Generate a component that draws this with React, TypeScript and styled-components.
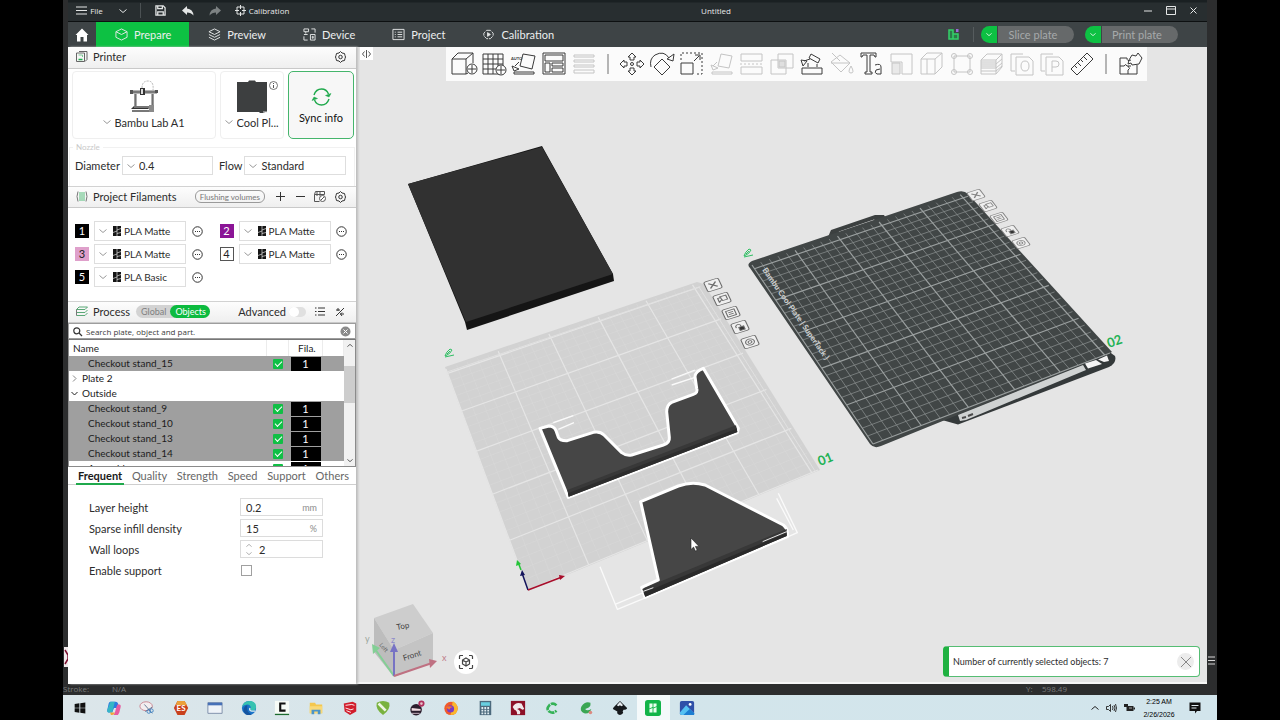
import React from "react";
import styled, { createGlobalStyle } from "styled-components";

const systemFont = `"Open Sans", "Noto Sans", sans-serif`;

const Global = createGlobalStyle`
  * { box-sizing: border-box; }
  html, body { margin: 0; background: #000; }
  body, button, input, select, table {
    font-family: Lato, "Open Sans", sans-serif;
    font-size: 11px;
    color: #2c2c2c;
  }
  button { border: 0; background: none; padding: 0; margin: 0; }
  svg { display: block; flex: none; overflow: visible; }
`;

/* ---------- shell ---------- */

const Desktop = styled.div`
  display: flex;
  flex-direction: column;
  min-height: 100vh;
  margin: 0 63px;
  background: #2c2d2e;
`;

const WindowRow = styled.div`
  display: flex;
  flex: 1;
  position: relative;
`;

const Window = styled.div`
  display: flex;
  flex-direction: column;
  flex: 1;
  min-width: 0;
  margin: 0 10px 0 5px;
  background: #e5e5e5;
`;

const EdgeMarks = styled.svg`
  position: absolute;
  top: 656px;
  right: 2px;
`;

const EdgeHandle = styled.svg`
  position: absolute;
  top: 646px;
  left: 0;
`;

const TitleBar = styled.header`
  display: flex;
  align-items: center;
  height: 22px;
  padding-right: 2px;
  background: linear-gradient(#1a2022 0, #1a2022 2px, #282e30 3px);
  border-bottom: 1px solid #0d1011;
`;

const TitleButton = styled.button<{ $w: number }>`
  display: flex;
  align-items: center;
  justify-content: center;
  gap: 3px;
  width: ${(p) => p.$w}px;
  height: 21px;
  color: #e8eaea;
  font-family: ${systemFont};
  font-size: 8px;
`;

const TitleRule = styled.span`
  width: 1px;
  height: 15px;
  margin: 0 6px;
  background: #4b5153;
`;

const TitleText = styled.h1`
  flex: 1;
  margin: 0;
  text-align: center;
  color: #e8eaea;
  font-family: ${systemFont};
  font-size: 8px;
  font-weight: 400;
`;

const TabBar = styled.nav`
  display: flex;
  align-items: center;
  height: 25px;
  padding-right: 29px;
  background: #3e4446;
`;

const TabRule = styled.span`
  width: 1px;
  height: 15px;
  margin: 0 -4px 0 14px;
  background: #565c5e;
`;

const HomeButton = styled.button`
  display: flex;
  align-items: center;
  justify-content: center;
  width: 28px;
  height: 25px;
`;

const MainTab = styled.button<{ $active?: boolean }>`
  display: flex;
  align-items: center;
  gap: 6px;
  height: 25px;
  padding: 0 18px 0 19px;
  color: #eceeee;
  background: ${(p) => (p.$active ? "#0dc143" : "transparent")};
`;

const Grow = styled.span`
  flex: 1;
`;

const PlateAction = styled.div`
  display: flex;
  height: 17px;
  margin-left: 11px;
  border-radius: 9px;
  overflow: hidden;
`;

const PlateMenu = styled.button`
  display: flex;
  align-items: center;
  justify-content: center;
  width: 17px;
  background: #0dc143;
  border-right: 1px solid #3e4446;
`;

const PlateButton = styled.button`
  width: 76px;
  padding-right: 6px;
  background: #66696a;
  color: #a6a9aa;
`;

const Body = styled.div`
  display: flex;
  flex: 1;
  min-height: 0;
`;

/* ---------- sidebar ---------- */

const Sidebar = styled.aside`
  display: flex;
  flex-direction: column;
  width: 288px;
  background: #fff;
  box-shadow: 2px 0 2px #bdbdbd;
  z-index: 1;
`;

const SectionHead = styled.div`
  display: flex;
  align-items: center;
  height: 22px;
  padding: 0 10px 1px 8px;
  background: linear-gradient(#fdfdfd, #efefef);
  border-top: 1px solid #d2d2d2;
  border-bottom: 1px solid #c9c9c9;
`;

const PrinterHead = styled(SectionHead)`
  padding-bottom: 2px;
  border-top: 0;
`;

const SectionTitle = styled.h2`
  margin: 0 0 0 5px;
  font-size: 11px;
  font-weight: 400;
`;

const IconButton = styled.button`
  display: flex;
  align-items: center;
  justify-content: center;
  height: 16px;
  min-width: 12px;
`;

const HeadIcons = styled.div`
  display: flex;
  align-items: center;
  gap: 8px;
`;

const PrinterCards = styled.div`
  display: flex;
  gap: 4px;
  padding: 2px 2px 0 4px;
`;

const DeviceCard = styled.div<{ $w?: number }>`
  position: relative;
  display: flex;
  flex-direction: column;
  align-items: center;
  flex: ${(p) => (p.$w ? `0 0 ${p.$w}px` : "1")};
  height: 68px;
  padding-top: 8px;
  border: 1px solid #efefef;
  border-radius: 4px;
`;

const InfoMark = styled.svg`
  position: absolute;
  top: 9px;
  right: 5px;
`;

const SyncButton = styled.button`
  display: flex;
  flex-direction: column;
  align-items: center;
  justify-content: center;
  gap: 4px;
  width: 66px;
  height: 68px;
  border: 1px solid #45b56c;
  border-radius: 5px;
  background: #f7f7f7;
  color: #111;
`;

const Picker = styled.label<{ $border?: boolean; $w?: number }>`
  display: flex;
  align-items: center;
  height: ${(p) => (p.$border ? 19 : 16)}px;
  width: ${(p) => (p.$w ? `${p.$w}px` : "auto")};
  padding-left: ${(p) => (p.$border ? 4 : 0)}px;
  gap: 4px;
  border: ${(p) => (p.$border ? "1px solid #dedede" : "0")};
  background: #fff;

  select {
    flex: 1;
    min-width: 0;
    padding: 0;
    border: 0;
    appearance: none;
    background: transparent;
    text-overflow: ellipsis;
    white-space: nowrap;
  }
`;

const Nozzle = styled.fieldset`
  display: flex;
  align-items: center;
  gap: 2px;
  min-width: 0;
  margin: 4px 1px 0;
  padding: 4px 0 11px 5px;
  border: 1px solid #f1f1f1;
  border-bottom: 0;

  legend {
    padding: 0 3px;
    margin-left: -2px;
    font-size: 8px;
    line-height: 9px;
    color: #c9c9c9;
  }
`;

const NozzleLabel = styled.span`
  & + label { margin-right: 4px; }
`;

const FlushButton = styled.button`
  height: 13px;
  padding: 0 4px;
  margin-right: 1px;
  border: 1px solid #9a9a9a;
  border-radius: 6px;
  color: #777;
  font-size: 8px;
  line-height: 10px;
`;

const Filaments = styled.div`
  display: grid;
  grid-template-columns: 1fr 1fr;
  gap: 3px 8px;
  padding: 13px 0 14px 7px;
`;

const FilamentRow = styled.div`
  display: flex;
  align-items: center;
  gap: 5px;
`;

const Swatch = styled.span<{ $bg: string; $fg: string }>`
  width: 14px;
  height: 14px;
  border: 1px solid ${(p) => (p.$bg === "#fff" ? "#555" : p.$bg)};
  background: ${(p) => p.$bg};
  color: ${(p) => p.$fg};
  line-height: 12px;
  text-align: center;
`;

const FilamentPicker = styled(Picker)`
  width: 92px;
  height: 20px;

  select { font-size: 10px; }
`;

const MarkSlot = styled.span`
  margin: 0 -1px 0 2px;
`;

const ModeSwitch = styled.div`
  display: flex;
  height: 13px;
  margin-left: 6px;
  border-radius: 7px;
  background: #d3d3d3;
`;

const ModeButton = styled.button<{ $on?: boolean }>`
  padding: 0 4px 0 5px;
  border-radius: 7px;
  font-size: 9px;
  line-height: 12px;
  background: ${(p) => (p.$on ? "#0dbb3f" : "transparent")};
  color: ${(p) => (p.$on ? "#fff" : "#808080")};
`;

const AdvancedLabel = styled.label`
  display: flex;
  align-items: center;
  gap: 3px;
  margin-right: 8px;
`;

const Toggle = styled.input`
  appearance: none;
  width: 17px;
  height: 10px;
  margin: 0;
  border-radius: 5px;
  background: #e0e0e0;

  &::before {
    content: "";
    display: block;
    width: 10px;
    height: 10px;
    border-radius: 5px;
    background: #fff;
  }
`;

const SearchRow = styled.label`
  display: flex;
  align-items: center;
  gap: 4px;
  height: 16px;
  padding: 0 4px;
  border: 1px solid #9d9d9d;

  input {
    flex: 1;
    min-width: 0;
    padding: 0;
    border: 0;
    outline: 0;
    font-family: ${systemFont};
    font-size: 8px;
    background: transparent;
  }
  input::placeholder { color: #3a3a3a; }
`;

const TreeFrame = styled.div`
  display: flex;
  height: 128px;
  overflow: hidden;
  border: 1px solid #8b8b8b;
  border-top-color: #777;
`;

const TreeScroll = styled.div`
  flex: 1;
  overflow: hidden;
`;

const Tree = styled.table`
  width: 100%;
  table-layout: fixed;
  border-collapse: collapse;

  th, td {
    height: 15px;
    padding: 0;
    font-size: 10px;
    font-weight: 400;
    line-height: 13px;
    text-align: left;
    color: #1c1c1c;
    overflow: hidden;
    white-space: nowrap;
  }
  th { height: 16px; border-right: 1px solid #ececec; padding-left: 4px; }
`;

const TreeRow = styled.tr<{ $selected?: boolean }>`
  background: ${(p) => (p.$selected ? "#9f9f9f" : "#fff")};
`;

const NameCell = styled.td<{ $level: number }>`
  && { padding-left: ${(p) => (p.$level ? 19 : 2)}px; }
`;

const NameText = styled.span`
  display: flex;
  align-items: center;
  gap: 4px;
`;

const PrintCheck = styled.input`
  appearance: none;
  display: block;
  width: 10px;
  height: 10px;
  margin: 0 0 0 6px;
  border-radius: 1px;
  background: #10bf45;

  &::before {
    content: "";
    display: block;
    width: 6px;
    height: 3px;
    margin: 2px 0 0 2px;
    border-left: 1px solid #fff;
    border-bottom: 1px solid #fff;
    transform: rotate(-45deg);
  }
`;

const FilaHead = styled.span`
  display: block;
  padding-left: 5px;
`;

const FilaCell = styled.td`
  && { padding: 0 2px; }
`;

const FilaBadge = styled.span`
  display: block;
  height: 14px;
  background: #000;
  color: #fff;
  text-align: center;
  font-size: 11px;
  line-height: 14px;
`;

const ScrollTrack = styled.div`
  display: flex;
  flex-direction: column;
  align-items: center;
  justify-content: space-between;
  width: 11px;
  padding: 4px 0;
  background: linear-gradient(#f1f1f1 26px, #cdcdcd 26px, #cdcdcd 63px, #f1f1f1 63px);
`;

const ParamTabs = styled.div`
  display: flex;
  justify-content: space-between;
  height: 18px;
  padding: 0 5px 0 8px;
  border-bottom: 1px solid #cfcfcf;
`;

const ParamTab = styled.button<{ $active?: boolean }>`
  height: 18px;
  padding: 0 2px;
  border-bottom: 2px solid ${(p) => (p.$active ? "#1fa94c" : "transparent")};
  color: ${(p) => (p.$active ? "#1a1a1a" : "#666")};
  font-weight: ${(p) => (p.$active ? 700 : 400)};
  line-height: 15px;
`;

const Params = styled.div`
  display: flex;
  flex-direction: column;
  gap: 3px;
  padding: 13px 33px 0 21px;
`;

const ParamRow = styled.label`
  display: flex;
  align-items: center;
  justify-content: space-between;
  height: 18px;
`;

const ValueBox = styled.span`
  display: flex;
  align-items: center;
  width: 83px;
  height: 18px;
  padding: 0 5px;
  gap: 7px;
  border: 1px solid #dcdcdc;

  input {
    flex: 1;
    min-width: 0;
    padding: 0;
    border: 0;
    outline: 0;
    background: transparent;
  }
`;

const Unit = styled.span`
  font-size: 9px;
  color: #8c8c8c;
`;

const Spin = styled.span`
  display: flex;
  flex-direction: column;
  gap: 5px;
`;

const PlainCheck = styled.input`
  appearance: none;
  width: 11px;
  height: 11px;
  margin: 0 71px 0 0;
  border: 1px solid #a0a0a0;
`;

/* ---------- viewport ---------- */

const Viewport = styled.main`
  position: relative;
  display: flex;
  align-items: flex-start;
  flex: 1;
  min-width: 0;
  padding-left: 4px;
  border-bottom: 2px solid #f6f6f6;
  background: #e5e5e5;
`;

const SceneSvg = styled.svg`
  position: absolute;
  inset: 0 0 0 4px;
  width: calc(100% - 4px);
  height: 100%;
`;

const CollapseButton = styled.button`
  position: relative;
  display: flex;
  align-items: center;
  justify-content: center;
  width: 13px;
  height: 13px;
  background: #fff;
`;

const ToolStrip = styled.div`
  position: relative;
  display: flex;
  align-items: center;
  height: 34px;
  margin-left: 73px;
  padding: 0 2px 0 3px;
  background: #fbfbfb;
`;

const ToolButton = styled.button<{ $off?: boolean }>`
  display: flex;
  align-items: center;
  justify-content: center;
  width: 30px;
  height: 34px;
  opacity: ${(p) => (p.$off ? 0.28 : 1)};
`;

const ToolRule = styled.span`
  width: 2px;
  height: 20px;
  margin: 0 8px;
  background: #b5b5b5;
`;

const FitButton = styled.button`
  position: absolute;
  left: 98px;
  bottom: 8px;
  display: flex;
  align-items: center;
  justify-content: center;
  width: 24px;
  height: 24px;
  border-radius: 12px;
  background: #fff;
`;

const Notice = styled.div`
  position: absolute;
  right: 7px;
  bottom: 5px;
  display: flex;
  align-items: center;
  justify-content: space-between;
  width: 257px;
  height: 31px;
  padding: 0 5px 0 4px;
  border: 1px solid #55bd73;
  border-left: 6px solid #1fb141;
  border-radius: 4px;
  background: #fff;
  font-size: 9px;
`;

const NoticeClose = styled.button`
  display: flex;
  align-items: center;
  justify-content: center;
  width: 17px;
  height: 17px;
  border-radius: 9px;
  background: #ececec;
`;

/* ---------- status strip and taskbar ---------- */

const StatusStrip = styled.div`
  display: flex;
  height: 11px;
  overflow: hidden;
  color: #7b7c7d;
  font-family: ${systemFont};
  font-size: 8px;
  line-height: 9px;
`;

const StatusItem = styled.span<{ $w: number }>`
  width: ${(p) => p.$w}px;
`;

const Taskbar = styled.footer`
  display: flex;
  align-items: center;
  height: 25px;
  background: linear-gradient(90deg, #dce6ea, #d3e5eb 50%, #d2e5ec);
`;

const Apps = styled.div`
  display: grid;
  grid-template-columns: repeat(19, 1fr);
  width: 641px;
`;

const AppButton = styled.button<{ $active?: boolean }>`
  display: flex;
  align-items: center;
  justify-content: center;
  height: 25px;
  background: ${(p) => (p.$active ? "#f4f9fa" : "transparent")};
`;

const Tray = styled.div`
  display: flex;
  align-items: center;
  gap: 7px;
  padding-right: 16px;
`;

const Clock = styled.time`
  width: 34px;
  margin-right: 6px;
  font-family: "Liberation Sans", Arial, sans-serif;
  font-size: 7px;
  line-height: 13px;
  text-align: center;
  white-space: nowrap;
  color: #000;
`;

/* ---------- small icons ---------- */

const Chevron = ({ c = "#9a9a9a", w = 8, up = false }: { c?: string; w?: number; up?: boolean }) => (
  <svg width={w} height={w / 2} viewBox="0 0 8 4" aria-hidden="true">
    <path d={up ? "M.5 3.5 4 .5 7.5 3.5" : "M.5.5 4 3.5 7.5.5"} fill="none" stroke={c} strokeWidth="1" />
  </svg>
);

const Gear = () => (
  <svg width="11" height="12" viewBox="0 0 22 24" fill="none" stroke="#333" strokeWidth="2">
    <path d="M11 1 14 4 19 5 20 9 21 12 20 15 19 19 14 20 11 23 8 20 3 19 2 15 1 12 2 9 3 5 8 4Z" />
    <circle cx="11" cy="12" r="3.500" />
  </svg>
);

const Dots = () => (
  <svg width="11" height="11" viewBox="0 0 22 22">
    <circle cx="11" cy="11" r="9.500" fill="none" stroke="#333" strokeWidth="2" />
    <path d="M6 11h2M10 11h2M14 11h2" stroke="#333" strokeWidth="2.400" />
  </svg>
);

const SpoolMark = () => (
  <svg width="8" height="10" viewBox="0 0 8 10">
    <path d="M0 0h8v10H0z" fill="#151515" />
    <path d="M4 0v10M0 6.500 4 5M4 4 8 2.500M4 7.500 8 6.500" stroke="#fff" strokeWidth=".6" />
  </svg>
);

const PrinterPicture = () => (
  <svg width="28" height="34" viewBox="0 0 28 34">
    <path d="M12 8Q12 1 18 1Q24 1 23 10" fill="none" stroke="#b5b5b5" strokeDasharray="2 1" />
    <path d="M5 12v16M23 12v16" stroke="#9a9a9a" strokeWidth="2" />
    <path d="M6 12v15M22 12v16" stroke="#333" strokeWidth=".8" />
    <path d="M1 10h26v4H1z" fill="#b4b4b4" />
    <path d="M2 12h24" stroke="#3f3f3f" />
    <path d="M10 8h5v7h-5z" fill="#333" />
    <path d="M11 9h2v5h-2z" fill="#ddd" />
    <path d="M0 10h3v4H0zM25 10h3v3h-3z" fill="#555" />
    <path d="M4 26h18l-4 3H1z" fill="#333" />
    <path d="M4 27h15" stroke="#bbb" />
    <path d="M2 31h21" stroke="#4b4b4b" strokeWidth="1.500" />
    <path d="M19 25h5v7h-5z" fill="#8a8a8a" />
  </svg>
);

const PlatePicture = () => (
  <svg width="32" height="34" viewBox="0 0 32 34">
    <path d="M1 2h11l1-1.500h6L20 2h11v30h-2l-1 1h-4l-1-1H1z" fill="#3d3f40" />
    <path d="M27 32h4" stroke="#ddd" />
  </svg>
);

/* Tool glyphs share a 26 x 24 box. */
const tools: { id: string; off?: boolean; art: React.ReactNode }[] = [
  { id: "Add", art: <><path d="M1 7h14v15H1zM1 7 7 1h15l-7 6M22 1v10M15 22l2-1" /><circle cx="21" cy="17" r="5" fill="#fff" /><path d="M21 13v8M17 17h8" /></> },
  { id: "Add plate", art: <><path d="M2 2h20v20H2zM7 2v20M12 2v20M17 2v20M2 7h20M2 12h20M2 17h20" /><circle cx="20" cy="18" r="5" fill="#fff" /><path d="M20 14v8M16 18h8" /></> },
  { id: "Auto orient", art: <><path d="M12 2 24 4 21 17 9 14ZM3 20h20v2H3zM1 14l2 5 5-2ZM4 14l4-4" /><text x="0" y="8" fontSize="4" fontWeight="700" fill="#333" stroke="none">AUTO</text></> },
  { id: "Arrange", art: <path d="M2 1h22v21H2zM4 3h18v6H4zM4 11h5v9H4zM11 11h11v3H11zM11 16h11v4H11z" /> },
  { id: "Layers", off: true, art: <path d="M3 3h20v2H3zM3 8h20v2H3zM3 13h20v2H3zM3 18h20v3H3z" /> },
  { id: "Move", art: <><circle cx="13" cy="12" r="1.500" /><path d="M13 1l4 4h-2v3h-4V5H9ZM13 23l4-4h-2v-3h-4v3H9ZM1 12l4-4v2h3v4H5v2ZM25 12l-4-4v2h-3v4h3v2Z" /></> },
  { id: "Rotate", art: <path d="M13 7l8 8-8 8-8-8ZM2 15Q0 7 6 3 15-2 20 6M18 7l6 2 1-7Z" /> },
  { id: "Scale", art: <><path d="M2 11h12v11H2z" /><path d="M2 8V1h21v21h-6" strokeDasharray="2 2" /><path d="M15 9l5-5M16 3h5v5" /></> },
  { id: "Lay flat", off: true, art: <path d="M12 2 23 4 20 16 9 14ZM3 20h20v2H3zM2 13l2 5 5-2ZM4 14l4-4" /> },
  { id: "Split to objects", off: true, art: <><path d="M2 9V2h21v7zM2 22v-7h21v7z" /><path d="M1 12h24" strokeDasharray="2 2" /></> },
  { id: "Split to parts", off: true, art: <><path d="M9 2h15v14H9zM2 8h15v14H2z" /><path d="M10 9h6v6h-6z" fill="#999" /></> },
  { id: "Cut", art: <><path d="M3 16h20v6H3zM9 15v-4M18 15v-3" /><path d="M12 2l9 5-2 4-9-5zM2 8l2 6 4-5zM5 9l6-2" /></> },
  { id: "Paint", off: true, art: <path d="M2 10 11 3l10 8-9 9ZM3 1l8 8M2 11h19M22 14q4 7 0 7t0-7" /> },
  { id: "Text", art: <><path d="M2 1h15v4h-1l-1-2h-4v17h2v2H6v-2h2V3H4L3 5H2z" /><path d="M16 13q6-2 6 2v7h-4q-3-1-1-4l4-1" /></> },
  { id: "Fill", off: true, art: <><path d="M2 2h21v20H13V10H2z" /><path d="M3 11h8v11H3z" fill="#bbb" /></> },
  { id: "Variable", off: true, art: <path d="M2 7h14v15H2zM2 7l6-6h15l-7 6M23 1v14l-7 7M8 7v15" /> },
  { id: "Mesh", off: true, art: <><path d="M5 4h16v16H5z" /><circle cx="5" cy="4" r="2.500" /><circle cx="21" cy="4" r="2.500" /><circle cx="5" cy="20" r="2.500" /><circle cx="21" cy="20" r="2.500" /></> },
  { id: "Fuzzy", off: true, art: <path d="M2 8h15v14H2zM2 8l6-6h15l-6 6M23 2v13l-6 7M2 12h15l6-5M2 16h15l6-5M2 19h15l6-5M2 10h15M2 14h15" /> },
  { id: "Overhang", off: true, art: <path d="M6 19H2V2h12M7 5h13l4 4v14H7zM16 9q4 0 4 5t-4 5-4-5 4-5" /> },
  { id: "Precise", off: true, art: <path d="M6 19H2V2h12M7 5h13l4 4v14H7zM13 20V9h4q3 0 3 3t-3 3h-4" /> },
  { id: "Measure", art: <path d="M2 17 18 1l6 6L8 23ZM6 14l2 2M9 11l3 3M12 8l2 2M15 5l3 3" /> },
  { id: "Assemble", art: <path d="M3 6h7q0 4 4 2M20 13v9H3V6M3 14h4q2-3 3 0h4M11 22v-4q3-1 0-4M12 8l3-5 4 1 2-3 4 5-3 6-7 1-1-2-3 1z" /> },
];

const ToolIcon = ({ art }: { art: React.ReactNode }) => (
  <svg width="26" height="24" viewBox="0 0 26 24" fill="none" stroke="#3a3a3a" strokeWidth="1">{art}</svg>
);

/* ---------- scene ---------- */

type Pt = [number, number];

/* Perspective map from the unit square (top left, top right, bottom right, bottom left). */
const projector = ([a, b, c, d]: Pt[]) => {
  const sx = a[0] - b[0] + c[0] - d[0];
  const sy = a[1] - b[1] + c[1] - d[1];
  const dx1 = b[0] - c[0], dx2 = d[0] - c[0];
  const dy1 = b[1] - c[1], dy2 = d[1] - c[1];
  const det = dx1 * dy2 - dx2 * dy1;
  const g = (sx * dy2 - dx2 * sy) / det;
  const h = (dx1 * sy - sx * dy1) / det;
  return (u: number, v: number) => {
    const w = g * u + h * v + 1;
    const x = ((b[0] - a[0] + g * b[0]) * u + (d[0] - a[0] + h * d[0]) * v + a[0]) / w;
    const y = ((b[1] - a[1] + g * b[1]) * u + (d[1] - a[1] + h * d[1]) * v + a[1]) / w;
    return `${x.toFixed(1)} ${y.toFixed(1)}`;
  };
};

const gridPaths = (corners: Pt[]) => {
  const at = projector(corners);
  let minor = "";
  let major = "";
  for (let i = 0; i <= 25; i++) {
    const t = i / 25.6;
    const seg = `M${at(t, 0)}L${at(t, 1)}M${at(0, 1 - t)}L${at(1, 1 - t)}`;
    if (i % 5 === 0) major += seg;
    else minor += seg;
  }
  return { minor, major };
};

const plateOne: Pt[] = [[446, 369], [698, 283], [818, 470], [528, 590]];
const plateTwo: Pt[] = [[752, 265], [965, 193], [1110, 353], [873, 444]];
const gridOne = gridPaths(plateOne);
const gridTwo = gridPaths(plateTwo);

const badgeArt = [
  <path d="M3 3l6 6M9 3 3 9" strokeWidth="1.2" />,
  <path d="M3 9V4h3M5 3h5v5H6zM3 9l3-3" />,
  <path d="M2.500 2.500h7v7h-7zM4 5h4M4 7h4" />,
  <><path d="M5 6h4v4H5z" fill="#333" /><path d="M3 6V4q2-3 4 0v2" /></>,
  <><circle cx="6" cy="6" r="3.500" /><circle cx="6" cy="6" r="1.500" /></>,
];

const Badges = ({ at, m, c }: { at: Pt[]; m: string; c: string }) => (
  <g fill="none" stroke={c} strokeWidth=".9">
    {at.map(([x, y], i) => (
      <g key={i} transform={`matrix(${m} ${x} ${y}) translate(-6 -6)`}>
        <rect width="12" height="12" rx="1.500" fill="#efefef" />
        {badgeArt[i]}
      </g>
    ))}
  </g>
);

const Pencil = ({ x, y }: { x: number; y: number }) => (
  <path transform={`translate(${x} ${y})`} d="M0 7Q1 3 5 0L7 1Q5 5 2 6ZM0 8 9 6M2 5l3-3" fill="none" stroke="#2fbf63" />
);

const Scene = () => (
  <SceneSvg viewBox="360 47 847 635" preserveAspectRatio="xMidYMid meet" role="img" aria-label="Build plates">
    {/* first plate */}
    <path d="M445 367 697 282 704 284 820 470 528 591Z" fill="#d2d2d2" />
    <path d={gridOne.minor} stroke="#d9d9d9" strokeWidth=".6" />
    <path d={gridOne.major} stroke="#e5e5e5" strokeWidth="1.200" />
    <path d="M447 372 699 287 815 471" fill="none" stroke="#e0e0e0" />

    {/* second plate */}
    <path d="M828 237 831 230 875 215 884 215 888 222Z" fill="#3c4040" />
    <path d="M839 231.500 874 219.500 876 221 838 234Z" fill="#e5e5e5" />
    <path d="M942 420 958 424.500 1109 367Q1117 363 1115 356L1100 345Z" fill="#34393a" />
    <path d="M750 268Q746 264 752 261L957 192Q964 190 968 194L1112 352 1106 355 881 446Q874 449 870 444Z" fill="#414646" />
    <path d="M958 415 1083 365 1086 370 966 420 960 421Z" fill="#cfd2d2" />
    <path d="M1085 363.500 1096 360 1102 364 1088 368.500ZM1098 359.500 1107 355.500 1109 361 1104 362Z" fill="#f4f4f4" />
    <path d="M962 418l4-1M968 416l5-2" stroke="#4a4a4a" strokeWidth="2" />
    <path d={gridTwo.minor} stroke="#858a8a" strokeWidth=".8" />
    <path d={gridTwo.major} stroke="#9a9f9f" strokeWidth="1.200" />
    <text transform="translate(762 270) rotate(55)" fontSize="8" fontWeight="900" fill="#c9cccc">Bambu Cool Plate | SuperTack )</text>

    <Pencil x={445} y={349} />
    <Pencil x={744} y={249} />
    <Badges at={[[713, 285], [722, 299], [731, 313], [740, 327], [750, 342]]} m="1.200 -.38 .38 .8" c="#6c6c6c" />
    <Badges at={[[976, 195], [988, 206], [999, 218], [1010, 231], [1021, 243]]} m="1.050 -.34 .5 .66" c="#858585" />

    {/* flat board */}
    <path d="M408 184 542 146 613 274 614 281 467 330 465 322Z" fill="#151515" />
    <path d="M408 184 542 147 613 274 466 322Z" fill="#313131" />

    {/* selected parts */}
    <g transform="translate(430 350) scale(.33333)" strokeLinejoin="round">
      <g fill="none" stroke="#fafafa" strokeWidth="4">
        <path d="M510 650 562 778 655 740M555 763 640 728M1045 430 1102 548 1070 562M1040 445 1090 540M370 218 430 197M385 238 432 218M725 87 795 60M725 105 795 82" />
      </g>
      <path d="M330 235 357 228Q372 228 378 242L385 262Q390 273 412 272L490 247Q510 243 522 255L575 308Q588 318 605 315L700 285Q720 278 718 262L710 185Q710 165 725 157L790 133Q805 128 800 115L795 80Q795 65 820 55L925 235 922 248 415 442Z" fill="#464646" stroke="#fff" strokeWidth="9" />
      <path d="M412 420 918 226 922 246 416 440Z" fill="#383838" />
      <path d="M414 430 920 236 922 246 416 440Z" fill="#2d2d2d" />
      <path d="M632 455 745 408Q785 393 825 405L1060 525Q1072 535 1072 548L1072 560 645 742 635 712 685 690Z" fill="#464646" stroke="#fff" strokeWidth="9" />
      <path d="M637 717 1070 537 1070 558 646 740Z" fill="#383838" />
      <path d="M641 728 1070 549 1070 558 646 740Z" fill="#2a2a2a" />
      <path d="M998 575 1070 545M640 724 670 713" stroke="#e8e8e8" strokeWidth="3" />
    </g>

    <g fontSize="13" fontWeight="700" fill="#22b254">
      <text transform="translate(820 466) rotate(-22)">01</text>
      <text transform="translate(1109 348) rotate(-20)">02</text>
    </g>

    {/* origin axes */}
    <g strokeWidth="1.500">
      <path d="M528 590 522 573" stroke="#14145c" />
      <path d="M521 570 518 562" stroke="#23c437" />
      <path d="M528 590 562 577" stroke="#a80d2a" />
    </g>
    <path d="M516 566 517 560 521 564Z" fill="#23c437" />
    <path d="M520 576 522 570 525 575Z" fill="#14145c" />
    <path d="M559 575 565 576 560 580Z" fill="#a80d2a" />

    {/* view cube */}
    <path d="M374 618 413 604 433 633 394 650Z" fill="#cdcdcd" />
    <path d="M374 618 394 650 394 677 374 652Z" fill="#bdbdbd" />
    <path d="M394 650 433 633 433 662 394 677Z" fill="#c4c4c4" />
    <g fill="#444" fontSize="8">
      <text transform="translate(397 630) rotate(-10)">Top</text>
      <text transform="translate(404 661) rotate(-18)">Front</text>
      <text transform="translate(379 645) rotate(50)" fill="#666" fontSize="6">Left</text>
    </g>
    <g strokeWidth="2" fill="none">
      <path d="M394 676 375 649" stroke="#83cf95" />
      <path d="M394 676V649" stroke="#7773c4" />
      <path d="M394 676 432 663" stroke="#bf7182" />
    </g>
    <path d="M372 644 380 648 373 654Z" fill="#83cf95" />
    <path d="M390 652 394 643 398 652Z" fill="#7773c4" />
    <path d="M429 659 437 661 430 668Z" fill="#bf7182" />
    <g fontSize="9">
      <text x="365" y="642" fill="#9ba69d">y</text>
      <text x="391" y="643" fill="#8d8acb">z</text>
      <text x="442" y="661" fill="#bd7a88">x</text>
    </g>

    <path d="M691 538v11.500l2.600-2.400 1.800 4 1.800-.8-1.800-3.900h3.600Z" fill="#fff" stroke="#222" strokeWidth=".6" />
  </SceneSvg>
);

/* ---------- taskbar art, 18 x 18 each ---------- */

const apps: { id: string; art: React.ReactNode }[] = [
  { id: "Start", art: <path d="M3 4.500 8.300 3.700V8.600H3zM9.300 3.600 15 2.800V8.600H9.300zM3 9.400H8.300V14.300L3 13.500zM9.300 9.400H15V15.200L9.300 14.400z" fill="#111" /> },
  { id: "Copilot", art: <><path d="M5 2h6q2 0 2.500 2L15 9H9L7 14H3Q1 14 1.500 11L3 4Q3.500 2 5 2Z" fill="#2c7be0" /><path d="M5 2h5L7 14H3Q1 14 1.500 11Z" fill="#36b6c5" /><path d="M13 5h2q2 0 1.500 3L15 14q-1 3-3 3H7q2 0 3-3l2-7Z" fill="#e85ba0" /><path d="M7 17q-2 0-2.500-3H10l-1 2Z" fill="#f2a93b" /></> },
  { id: "Snip", art: <><ellipse cx="8" cy="7" rx="7" ry="5" fill="#f3eef0" stroke="#c7808c" /><path d="M6 5l9 10M15 8 7 13" stroke="#58708c" /><circle cx="11" cy="13" r="2" fill="none" stroke="#3f83c4" /><circle cx="14" cy="12" r="2" fill="none" stroke="#3f83c4" /></> },
  { id: "ES", art: <><path d="M5 1h8l4 8-4 8H5L1 9z" fill="#c9401c" /><path d="M5 1h8l3 5H3z" fill="#eba03a" /><text x="4" y="12" fontSize="9" fontWeight="700" fill="#fff">ES</text></> },
  { id: "Window", art: <><path d="M1 3h16v12H1z" fill="#eef3f8" stroke="#7688a5" /><path d="M1 3h16v3H1z" fill="#4671b8" /></> },
  { id: "Edge", art: <><circle cx="9" cy="9" r="8" fill="#1a73c9" /><path d="M1 8Q3 1 9.500 1 17 1 17 8q0 4-5 4-3-1-1-3 0-4-4-4-4 0-6 3Z" fill="#37c2b0" /><path d="M7 8q-1 6 5 8-3 2-7 0Q1 12 4 8q1-2 3-2Z" fill="#1454a0" /><path d="M10 9q-1 3 2 3.500h4" stroke="#dfeaf0" strokeWidth="1.500" fill="none" /></> },
  { id: "Camtasia", art: <><path d="M1 1h16v16H1z" fill="#f6fbf6" /><path d="M13 4H7v8h6" fill="none" stroke="#111" strokeWidth="2.400" /><path d="M1 15.500h16V17H1z" fill="#1b6b30" /></> },
  { id: "Files", art: <><path d="M2 3h6l1 2h7v10H2z" fill="#f4c74e" /><path d="M2 7h14v8H2z" fill="#f9d978" /><path d="M4 16v-5h10v5h-3v-3H7v3z" fill="#4a94c9" /></> },
  { id: "SketchUp", art: <><path d="M2 4 12 2l4 2v9l-7 4-6-4z" fill="#d11d2c" /><path d="M4 6l7-1 3 1M4 9l6 2 3-1M5 12l5 2" stroke="#fff" fill="none" /></> },
  { id: "CorelDRAW", art: <><path d="M2 3Q9-1 16 3q2 7-7 14Q0 10 2 3Z" fill="#79b23f" /><path d="M4 4l8 8" stroke="#eef5e4" strokeWidth="3" /></> },
  { id: "Ninja", art: <><circle cx="8" cy="11" r="6.500" fill="#2a1d2c" /><path d="M3 9l10 1v2H3z" fill="#f0dbe0" /><circle cx="14" cy="4" r="2.500" fill="#e7c3cb" stroke="#b0305c" strokeWidth="2" /><path d="M3 15h9" stroke="#d8c4d0" strokeWidth="1" /></> },
  { id: "Firefox", art: <><circle cx="9" cy="9.500" r="7.500" fill="#f0592b" /><path d="M11 1q6 4 5.500 9-1 7-8 7Z" fill="#fbb72c" /><circle cx="8.500" cy="10" r="4" fill="#7a3bc2" /><path d="M3 8q4-2 8 0-3 0-4 3Z" fill="#f7782a" /></> },
  { id: "Calculator", art: <><path d="M3 1h13v16H3z" fill="#4c6a7d" /><path d="M4.500 2.500h10v4h-10z" fill="#67cfe0" /><path d="M5 9h9M5 12h9M5 15h9" stroke="#e1edf2" strokeWidth="2" strokeDasharray="2 1.300" /></> },
  { id: "Dragon", art: <><path d="M1 1h16v16H1z" fill="#8d1027" /><path d="M3 8Q6 2 13 4l3 6-2 1-3-2-3 1q5 2 3 6H8q0-4-3-5Z" fill="#f1e7ea" /></> },
  { id: "Craft", art: <path d="M14 6Q10 2 6 6t0 7q4 3 8-1" fill="none" stroke="#35b257" strokeWidth="3" strokeDasharray="7 1" /> },
  { id: "Cut", art: <><path d="M14 3Q8 1 4 7q-3 5 3 8 6 1 8-5-5 3-7 0 5-1 6-4" fill="#3aa653" /><circle cx="14" cy="14" r="2" fill="#db8a80" /></> },
  { id: "Inkscape", art: <><path d="M9 1l8 8q0 2-4 2l-1 2q2 2-3 4-4-1-3-4L1 10q0-1 2-3Z" fill="#16191c" /><path d="M9 2l3.500 4-2 1-1.500-1-2 1-1.500-1Z" fill="#e8eef2" /></> },
  { id: "Bambu Studio", art: <><rect x="0" y="0" width="18" height="18" rx="3" fill="#12b449" /><path d="M5 4h3.500v4L5 9.500zM5 10.500l3.500-1.500v5H5zM9.500 4H13v3L9.500 8.500zM9.500 9.500 13 8v6H9.500z" fill="#e9fff0" /></> },
  { id: "Photos", art: <><rect x="1" y="1" width="16" height="16" rx="2" fill="#2f4fa8" /><path d="M1 14 8 6l9 9v1q0 1-2 1H3q-2 0-2-2Z" fill="#55c1f2" /><path d="M9 13l3-3 5 5v2H5z" fill="#1c7ed2" /><circle cx="12.500" cy="5" r="1.600" fill="#fff" /></> },
];

/* ---------- data ---------- */

const filaments = [
  { n: 1, bg: "#000", fg: "#fff", name: "PLA Matte" },
  { n: 2, bg: "#8b1596", fg: "#fff", name: "PLA Matte" },
  { n: 3, bg: "#dfa0cb", fg: "#222", name: "PLA Matte" },
  { n: 4, bg: "#fff", fg: "#222", name: "PLA Matte" },
  { n: 5, bg: "#000", fg: "#fff", name: "PLA Basic" },
];

const treeRows: { name: string; level: number; open?: boolean; selected?: boolean; item?: boolean }[] = [
  { name: "Checkout stand_15", level: 1, selected: true, item: true },
  { name: "Plate 2", level: 0, open: false },
  { name: "Outside", level: 0, open: true },
  { name: "Checkout stand_9", level: 1, selected: true, item: true },
  { name: "Checkout stand_10", level: 1, selected: true, item: true },
  { name: "Checkout stand_13", level: 1, selected: true, item: true },
  { name: "Checkout stand_14", level: 1, selected: true, item: true },
  { name: "Assembly", level: 1, item: true },
];

const tabIcons = {
  prepare: <path d="M7 1 13 4v6l-6 3-6-3V4ZM1 4l6 3 6-3" />,
  preview: <path d="M7 1 13 4 7 7 1 4ZM1 7l6 3 6-3M1 10l6 3 6-3" />,
  device: <path d="M1 1h5v3H1zM3 4v2M9 1h4v4M1 9v4h4M8 7h5v6H8zM10 9h1v2h-1zM1 7h4" />,
  project: <path d="M1 1.500h12v11H1zM3 4.500h1M6 4.500h5M3 7h1M6 7h5M3 9.500h1M6 9.500h5" />,
  calibration: <><path d="M5 2.500h4l3 3v3l-3 3H5l-3-3v-3Z" strokeDasharray="5 1" /><path d="M6 5l3 2-3 2z" fill="#e6e8e8" /></>,
};

const TabIcon = ({ name }: { name: keyof typeof tabIcons }) => (
  <svg width="13" height="13" viewBox="0 0 14 14" fill="none" stroke="#e6e8e8" strokeWidth="1">{tabIcons[name]}</svg>
);

/* ---------- page ---------- */

export default function App() {
  return (
    <>
      <Global />
      <Desktop>
        <WindowRow>
          <EdgeHandle width="5" height="22" viewBox="0 0 5 22">
            <path d="M1 1h4v20H1z" fill="#f1eaec" />
            <path d="M2 4l3 5v4l-3 5" fill="none" stroke="#7c1030" strokeWidth="1.500" />
          </EdgeHandle>
          <EdgeMarks width="7" height="9" viewBox="0 0 7 9">
            <path d="M0 1h7M0 4.500h7M0 8h7" stroke="#d8d8d8" />
          </EdgeMarks>
          <Window>
            <TitleBar>
              <TitleButton $w={43}>
                <svg width="11" height="9" viewBox="0 0 11 9"><path d="M0 1h11M0 4.500h11M0 8h11" stroke="#e4e6e6" /></svg>
                File
              </TitleButton>
              <TitleButton $w={23} aria-label="More"><Chevron c="#e4e6e6" w={8} /></TitleButton>
              <TitleRule />
              <TitleButton $w={27} aria-label="Save">
                <svg width="11" height="11" viewBox="0 0 12 12" fill="none" stroke="#e4e6e6" strokeWidth="1.400">
                  <path d="M1 1h8l2 2v8H1zM3 1v3h5V1M3 11V7.500h6V11" />
                </svg>
              </TitleButton>
              <TitleButton $w={27} aria-label="Undo">
                <svg width="12" height="10" viewBox="0 0 12 10"><path d="M5 0v2.500Q11 3 11.500 9.500 9 6.500 5 6.500V9L0 4.500Z" fill="#e4e6e6" /></svg>
              </TitleButton>
              <TitleButton $w={27} aria-label="Redo">
                <svg width="12" height="10" viewBox="0 0 12 10"><path d="M7 0v2.500Q1 3 .5 9.500 3 6.500 7 6.500V9l5-4.500Z" fill="#7d8283" /></svg>
              </TitleButton>
              <TitleButton $w={68}>
                <svg width="11" height="11" viewBox="0 0 11 11" fill="none" stroke="#e4e6e6"><path d="M2 2h7v7H2zM5.500 0v4M5.500 7v4M0 5.500h4M7 5.500h4" /></svg>
                Calibration
              </TitleButton>
              <TitleText>Untitled</TitleText>
              <TitleButton $w={23} aria-label="Minimize"><svg width="8" height="8" viewBox="0 0 8 8"><path d="M0 4h8" stroke="#e4e6e6" /></svg></TitleButton>
              <TitleButton $w={23} aria-label="Maximize"><svg width="10" height="9" viewBox="0 0 10 9" fill="none" stroke="#e4e6e6"><path d="M.5.5h9v8h-9zM.5 3h9" /></svg></TitleButton>
              <TitleButton $w={23} aria-label="Close"><svg width="7" height="7" viewBox="0 0 7 7"><path d="M.5.5l6 6M6.500.5l-6 6" stroke="#e4e6e6" /></svg></TitleButton>
            </TitleBar>

            <TabBar>
              <HomeButton aria-label="Home">
                <svg width="14" height="14" viewBox="0 0 14 14"><path d="M7 .5 13.500 7H12v6.500H8.500V9h-3v4.500H2V7H.5Z" fill="#fff" /></svg>
              </HomeButton>
              <MainTab $active><TabIcon name="prepare" />Prepare</MainTab>
              <MainTab><TabIcon name="preview" />Preview</MainTab>
              <MainTab><TabIcon name="device" />Device</MainTab>
              <MainTab><TabIcon name="project" />Project</MainTab>
              <MainTab><TabIcon name="calibration" />Calibration</MainTab>
              <Grow />
              <IconButton aria-label="Assistant">
                <svg width="11" height="11" viewBox="0 0 11 11" fill="none" strokeWidth="1.500">
                  <path d="M1 1h4v9H1zM5 5h5v5H5z" stroke="#35d169" fill="#2b7a4a" />
                  <path d="M8 0h2.500v3H8z" fill="#9b6bd8" />
                </svg>
              </IconButton>
              <TabRule />
              <PlateAction>
                <PlateMenu aria-label="Slice options"><Chevron c="#fff" w={6} /></PlateMenu>
                <PlateButton>Slice plate</PlateButton>
              </PlateAction>
              <PlateAction>
                <PlateMenu aria-label="Print options"><Chevron c="#fff" w={6} /></PlateMenu>
                <PlateButton>Print plate</PlateButton>
              </PlateAction>
            </TabBar>

            <Body>
              <Sidebar>
                <PrinterHead>
                  <svg width="12" height="11" viewBox="0 0 12 11" fill="none" stroke="#666"><path d="M.5 2h8v8.500h-8zM3 .5h8v8l-2 2" /><path d="M2.500 8.500h4" stroke="#1fb14f" strokeWidth="1.500" /><path d="M2.500 4h4v2" stroke="#7cc796" /></svg>
                  <SectionTitle>Printer</SectionTitle>
                  <Grow />
                  <IconButton aria-label="Printer settings"><Gear /></IconButton>
                </PrinterHead>

                <PrinterCards>
                  <DeviceCard>
                    <PrinterPicture />
                    <Picker>
                      <Chevron />
                      <select aria-label="Printer model"><option>Bambu Lab A1</option></select>
                    </Picker>
                  </DeviceCard>
                  <DeviceCard $w={64}>
                    <PlatePicture />
                    <InfoMark width="9" height="9" viewBox="0 0 9 9">
                      <circle cx="4.500" cy="4.500" r="4" fill="none" stroke="#555" strokeWidth=".8" />
                      <path d="M4.500 2v1M4.500 4v3" stroke="#555" />
                    </InfoMark>
                    <Picker>
                      <Chevron />
                      <select aria-label="Plate type"><option>Cool Pl...</option></select>
                    </Picker>
                  </DeviceCard>
                  <SyncButton>
                    <svg width="21" height="20" viewBox="0 0 21 20" fill="none" stroke="#1fa94c" strokeWidth="1.400">
                      <path d="M3 8Q5 2 10.500 2q5 0 7 5M18 12q-2 6-7.500 6-5 0-7-5" />
                      <path d="M14.500 8.500 18 10l2-3.500ZM6.500 11.500 3 10l-2 3.500Z" fill="#1fa94c" strokeWidth=".5" />
                    </svg>
                    Sync info
                  </SyncButton>
                </PrinterCards>

                <Nozzle>
                  <legend>Nozzle</legend>
                  <NozzleLabel>Diameter</NozzleLabel>
                  <Picker $border $w={91}><Chevron /><select aria-label="Diameter"><option>0.4</option></select></Picker>
                  <NozzleLabel>Flow</NozzleLabel>
                  <Picker $border $w={102}><Chevron /><select aria-label="Flow"><option>Standard</option></select></Picker>
                </Nozzle>

                <SectionHead>
                  <svg width="12" height="11" viewBox="0 0 12 11" fill="none"><path d="M2 .5q-2 5 0 10M10 .5q2 5 0 10" stroke="#777" /><path d="M4 1v9M6 1v9M8 1v9" stroke="#56bd7c" /></svg>
                  <SectionTitle>Project Filaments</SectionTitle>
                  <Grow />
                  <HeadIcons>
                    <FlushButton>Flushing volumes</FlushButton>
                    <IconButton aria-label="Add filament"><svg width="9" height="9" viewBox="0 0 9 9"><path d="M0 4.500h9M4.500 0v9" stroke="#333" /></svg></IconButton>
                    <IconButton aria-label="Remove filament"><svg width="9" height="9" viewBox="0 0 9 9"><path d="M0 4.500h9" stroke="#333" /></svg></IconButton>
                    <IconButton aria-label="Sync filaments">
                      <svg width="12" height="11" viewBox="0 0 12 11" fill="none" stroke="#555"><path d="M.5 3.500h10v-3h-9zM.5 3.500v7h5M3 1v4M6 1v4" /><circle cx="8.500" cy="7.500" r="3" fill="#fff" /><path d="M7 9l3-3" /></svg>
                    </IconButton>
                    <IconButton aria-label="Filament settings"><Gear /></IconButton>
                  </HeadIcons>
                </SectionHead>

                <Filaments>
                  {filaments.map((f) => (
                    <FilamentRow key={f.n}>
                      <Swatch $bg={f.bg} $fg={f.fg}>{f.n}</Swatch>
                      <FilamentPicker $border>
                        <Chevron />
                        <MarkSlot><SpoolMark /></MarkSlot>
                        <select aria-label={`Filament ${f.n}`}><option>{f.name}</option></select>
                      </FilamentPicker>
                      <IconButton aria-label="Edit filament"><Dots /></IconButton>
                    </FilamentRow>
                  ))}
                </Filaments>

                <SectionHead>
                  <svg width="12" height="11" viewBox="0 0 12 11" fill="none" stroke="#5aa877"><path d="M3 1h8.500L9 3.500H.5ZM.5 6.500H9L11.500 4M.5 9.500H9L11.500 7" /><path d="M.5 3.500v6" stroke="#777" /></svg>
                  <SectionTitle>Process</SectionTitle>
                  <ModeSwitch>
                    <ModeButton>Global</ModeButton>
                    <ModeButton $on>Objects</ModeButton>
                  </ModeSwitch>
                  <Grow />
                  <AdvancedLabel>Advanced<Toggle type="checkbox" /></AdvancedLabel>
                  <HeadIcons>
                    <IconButton aria-label="List"><svg width="10" height="9" viewBox="0 0 10 9"><path d="M0 1h1.500M3 1h7M0 4.500h1.500M3 4.500h7M0 8h1.500M3 8h7" stroke="#333" /></svg></IconButton>
                    <IconButton aria-label="Compare"><svg width="10" height="10" viewBox="0 0 10 10" fill="none" stroke="#333"><path d="M1 9 9 1M1 3h4M3 1v3M5 7h4M7 5.500 5.500 7 7 9" /></svg></IconButton>
                  </HeadIcons>
                </SectionHead>

                <SearchRow>
                  <svg width="9" height="9" viewBox="0 0 9 9" fill="none" stroke="#333" strokeWidth="1.200"><circle cx="3.800" cy="3.800" r="3" /><path d="M6 6l3 3" /></svg>
                  <input aria-label="Search" placeholder="Search plate, object and part." />
                  <svg width="11" height="11" viewBox="0 0 11 11"><circle cx="5.500" cy="5.500" r="5" fill="#8a8a8a" /><path d="M3.500 3.500l4 4M7.500 3.500l-4 4" stroke="#fff" /></svg>
                </SearchRow>

                <TreeFrame>
                  <TreeScroll>
                    <Tree>
                      <colgroup><col /><col width="22" /><col width="34" /><col width="21" /></colgroup>
                      <thead><tr><th scope="col">Name</th><th scope="col" aria-label="Printable" /><th scope="col"><FilaHead>Fila.</FilaHead></th><th aria-label="Edit" /></tr></thead>
                      <tbody>
                        {treeRows.map((r) => (
                          <TreeRow key={r.name} $selected={r.selected}>
                            <NameCell $level={r.level}>
                              <NameText>
                                {r.level === 0 && (
                                  <svg width="7" height="7" viewBox="0 0 7 7" fill="none" stroke={r.open ? "#222" : "#888"}>
                                    <path d={r.open ? "M.5 2l3 3 3-3" : "M2 .5l3 3-3 3"} />
                                  </svg>
                                )}
                                {r.name}
                              </NameText>
                            </NameCell>
                            <td>{r.item && <PrintCheck type="checkbox" defaultChecked aria-label={`Print ${r.name}`} />}</td>
                            <FilaCell>{r.item && <FilaBadge>1</FilaBadge>}</FilaCell>
                            <td />
                          </TreeRow>
                        ))}
                      </tbody>
                    </Tree>
                  </TreeScroll>
                  <ScrollTrack><Chevron c="#333" w={6} up /><Chevron c="#333" w={6} /></ScrollTrack>
                </TreeFrame>

                <ParamTabs>
                  {["Frequent", "Quality", "Strength", "Speed", "Support", "Others"].map((t, i) => (
                    <ParamTab key={t} $active={i === 0}>{t}</ParamTab>
                  ))}
                </ParamTabs>

                <Params>
                  <ParamRow>Layer height<ValueBox><input defaultValue="0.2" /><Unit>mm</Unit></ValueBox></ParamRow>
                  <ParamRow>Sparse infill density<ValueBox><input defaultValue="15" /><Unit>%</Unit></ValueBox></ParamRow>
                  <ParamRow>
                    Wall loops
                    <ValueBox>
                      <Spin><Chevron w={6} up /><Chevron w={6} /></Spin>
                      <input defaultValue="2" />
                    </ValueBox>
                  </ParamRow>
                  <ParamRow>Enable support<PlainCheck type="checkbox" /></ParamRow>
                </Params>
              </Sidebar>

              <Viewport>
                <Scene />
                <CollapseButton aria-label="Collapse sidebar">
                  <svg width="9" height="8" viewBox="0 0 9 8" fill="none" stroke="#555"><path d="M4.500 0v8M2.500 1.500 .5 4l2 2.500M6.500 1.500l2 2.500-2 2.500" /></svg>
                </CollapseButton>
                <ToolStrip>
                  {tools.map((t, i) => (
                    <React.Fragment key={t.id}>
                      {(i === 5 || i === 21) && <ToolRule />}
                      <ToolButton $off={t.off} aria-label={t.id}><ToolIcon art={t.art} /></ToolButton>
                    </React.Fragment>
                  ))}
                </ToolStrip>
                <FitButton aria-label="Fit view">
                  <svg width="14" height="14" viewBox="0 0 14 14" fill="none" stroke="#444" strokeWidth="1.200">
                    <path d="M.5 4V1.500q0-1 1-1H4M10 .5h2.500q1 0 1 1V4M13.500 10v2.500q0 1-1 1H10M4 13.500H1.500q-1 0-1-1V10M7 3l3.500 2v4L7 11 3.500 9V5ZM3.500 5 7 7l3.500-2M7 7v4" />
                  </svg>
                </FitButton>
                <Notice role="status">
                  Number of currently selected objects: 7
                  <NoticeClose aria-label="Dismiss"><svg width="10" height="10" viewBox="0 0 10 10"><path d="M0 0l10 10M10 0 0 10" stroke="#888" /></svg></NoticeClose>
                </Notice>
              </Viewport>
            </Body>
          </Window>
        </WindowRow>

        <StatusStrip>
          <StatusItem $w={49}>Stroke:</StatusItem>
          <StatusItem $w={49}>N/A</StatusItem>
          <Grow />
          <StatusItem $w={16}>Y:</StatusItem>
          <StatusItem $w={175}>598.49</StatusItem>
        </StatusStrip>

        <Taskbar>
          <Apps>
            {apps.map((a) => (
              <AppButton key={a.id} aria-label={a.id} $active={a.id === "Bambu Studio"}>
                <svg width="16" height="16" viewBox="0 0 18 18">{a.art}</svg>
              </AppButton>
            ))}
          </Apps>
          <Grow />
          <Tray>
            <Chevron c="#222" w={8} up />
            <svg width="11" height="10" viewBox="0 0 11 10" fill="none" stroke="#222"><path d="M.5 3.500h2l2-2v7l-2-2h-2zM6.500 3q1 2 0 4M8 2q2 3 0 6M9.500 1q2 4 0 8" strokeWidth=".9" /></svg>
            <svg width="11" height="9" viewBox="0 0 11 9"><path d="M2.500 3h7v5h-7z" fill="#222" /><path d="M0 1h4v3H0zM9.500 4.500h1.500v2H9.500z" fill="#222" /><path d="M5 5h3" stroke="#aaa" /></svg>
            <Clock>2:25 AM<br />2/26/2026</Clock>
            <svg width="12" height="12" viewBox="0 0 12 12"><path d="M.5.500h11v8.500H8L6 11.500V9H.5z" fill="#111" /><path d="M2.500 3.500h7M2.500 6h5" stroke="#dfe9ee" /></svg>
          </Tray>
        </Taskbar>
      </Desktop>
    </>
  );
}
